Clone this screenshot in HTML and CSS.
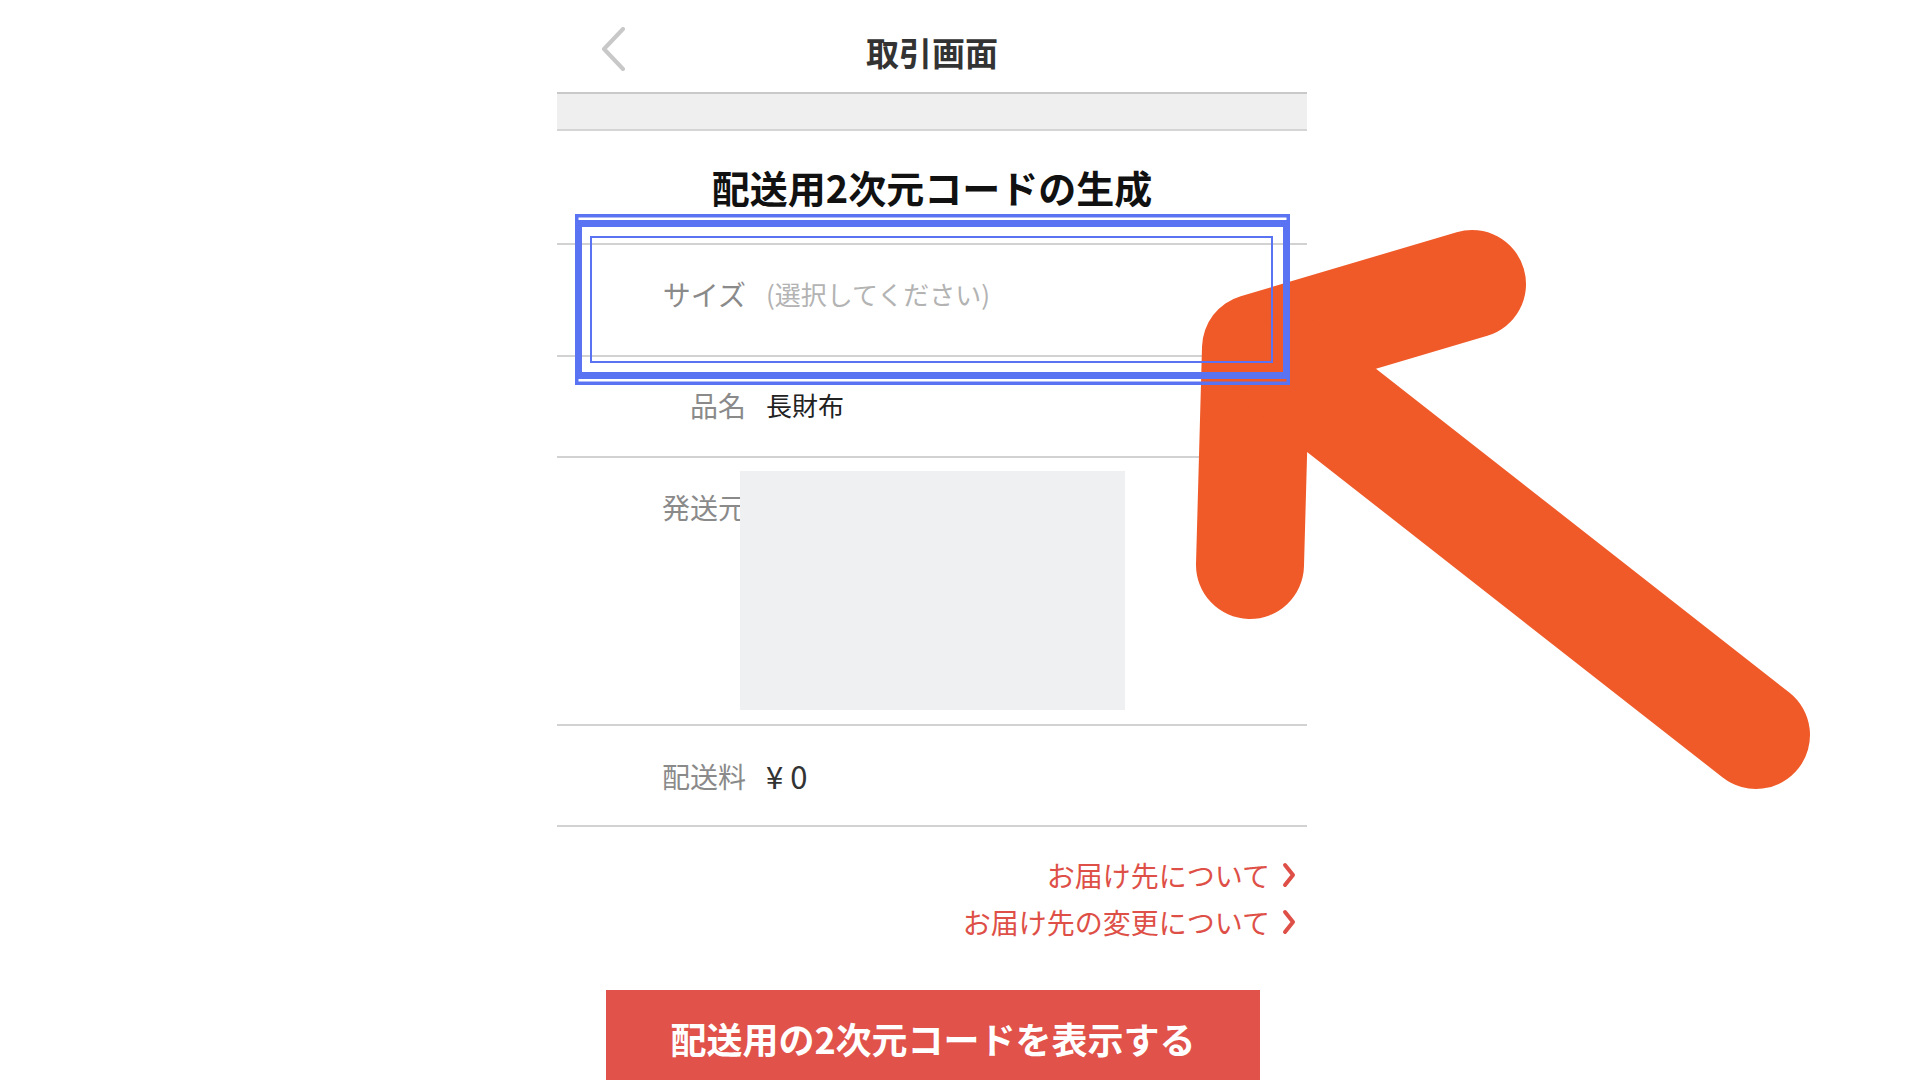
FILE: index.html
```html
<!DOCTYPE html>
<html lang="ja">
<head>
    <meta charset="UTF-8">
    <meta name="viewport" content="width=device-width, initial-scale=1.0">
    <title>取引画面</title>
    <link rel="stylesheet" href="styles.css">
</head>
<body>
    <div class="screen">
        <header class="nav">
            <span class="nav-back">
                <svg width="26" height="44" viewBox="0 0 26 44">
                    <polyline points="22,2 3,22 22,42" fill="none" stroke="#c8c8c8" stroke-width="4" stroke-linecap="round" stroke-linejoin="round"/>
                </svg>
            </span>
            <h1 class="nav-title">取引画面</h1>
            <span></span>
        </header>
        <div class="nav-band"></div>

        <h2 class="section-title">配送用2次元コードの生成</h2>

        <div class="row row-size">
            <span class="row-label">サイズ</span>
            <span class="row-value placeholder">(選択してください)</span>
        </div>
        <div class="row row-name">
            <span class="row-label">品名</span>
            <span class="row-value">長財布</span>
        </div>
        <div class="row row-address">
            <span class="row-label">発送元</span>
            <div class="address-box"></div>
        </div>
        <div class="row">
            <span class="row-label">配送料</span>
            <span class="row-value price">¥0</span>
        </div>

        <div class="links">
            <a class="link">お届け先について
                <svg width="14" height="26" viewBox="0 0 14 26"><polyline points="3,3 11,13 3,23" fill="none" stroke="#de5047" stroke-width="4" stroke-linecap="round" stroke-linejoin="round"/></svg>
            </a>
            <a class="link">お届け先の変更について
                <svg width="14" height="26" viewBox="0 0 14 26"><polyline points="3,3 11,13 3,23" fill="none" stroke="#de5047" stroke-width="4" stroke-linecap="round" stroke-linejoin="round"/></svg>
            </a>
        </div>

        <button class="primary-btn">配送用の2次元コードを表示する</button>
    </div>

    <!-- annotation layer: arrow + highlight box -->
    <svg class="annotation" width="1920" height="1080" viewBox="0 0 1920 1080">
        <g stroke="#f05a28" stroke-width="108" stroke-linecap="round" stroke-linejoin="round" fill="none">
            <polyline points="1472,284 1256,348 1250,565"/>
            <line x1="1290" y1="370" x2="1756" y2="735"/>
        </g>
        <g fill="none" stroke="#5a73f2">
            <rect x="576.75" y="215.75" width="711.5" height="167.5" stroke-width="3.5"/>
            <rect x="578.5" y="223.5" width="708" height="152" stroke-width="7"/>
            <rect x="591" y="237" width="681" height="125" stroke-width="2"/>
        </g>
    </svg>
</body>
</html>
```

FILE: styles.css
```css
body {
    font-family: "Noto Sans CJK JP", sans-serif;
    margin: 0;
    padding: 0;
    background: #fff;
    position: relative;
    height: 1080px;
    overflow: hidden;
}

.screen {
    width: 750px;
    margin-left: 557px;
}

.nav {
    height: 92px;
    display: grid;
    grid-template-columns: 1fr auto 1fr;
    align-items: center;
    border-bottom: 2px solid #c9c9c9;
}

.nav-back {
    margin-left: 44px;
    margin-top: 6px;
    display: flex;
}

.nav-title {
    margin: 12px 0 0;
    font-size: 33px;
    line-height: 1;
    font-weight: bold;
    color: #333;
}

.nav-band {
    height: 35px;
    background: #efefef;
    border-bottom: 2px solid #d5d5d5;
}

.section-title {
    height: 112px;
    margin: 0;
    display: flex;
    align-items: center;
    justify-content: center;
    font-size: 38px;
    line-height: 1;
    font-weight: bold;
    color: #111;
}

.row {
    display: grid;
    grid-template-columns: 189px 1fr;
    column-gap: 20px;
    align-items: center;
    border-top: 2px solid #d2d2d2;
    height: 99px;
}

.row-size {
    height: 97px;
    padding-bottom: 13px;
}

.row-name {
    height: 95px;
    padding-bottom: 4px;
}

.row-label {
    text-align: right;
    font-size: 28px;
    line-height: 1;
    color: #8a8a8a;
}

.row-value {
    font-size: 26px;
    line-height: 1;
    color: #222;
}

.placeholder {
    color: #b3b3b3;
}

.price {
    font-size: 31px;
    letter-spacing: 7px;
    color: #333;
}

.row-address {
    height: auto;
    padding: 13px 0 14px;
    align-items: start;
}

.row-address .row-label {
    padding-top: 22px;
}

.address-box {
    position: relative;
    margin-left: -26px;
    width: 385px;
    height: 239px;
    background: #eff0f2;
}

.links {
    border-top: 2px solid #d2d2d2;
    padding: 24px 11px 0 0;
    display: flex;
    flex-direction: column;
    align-items: flex-end;
}

.link {
    display: flex;
    align-items: center;
    gap: 12px;
    height: 47px;
    font-size: 28px;
    color: #de5047;
    text-decoration: none;
}

.primary-btn {
    display: block;
    width: 654px;
    height: 100px;
    margin: 45px 0 0 49px;
    padding: 0 0 4px;
    border: none;
    background: #e0524a;
    color: #fff;
    font-family: "Noto Sans CJK JP", sans-serif;
    font-size: 36px;
    font-weight: bold;
    line-height: 1;
}

.annotation {
    position: absolute;
    left: 0;
    top: 0;
    pointer-events: none;
}
```
